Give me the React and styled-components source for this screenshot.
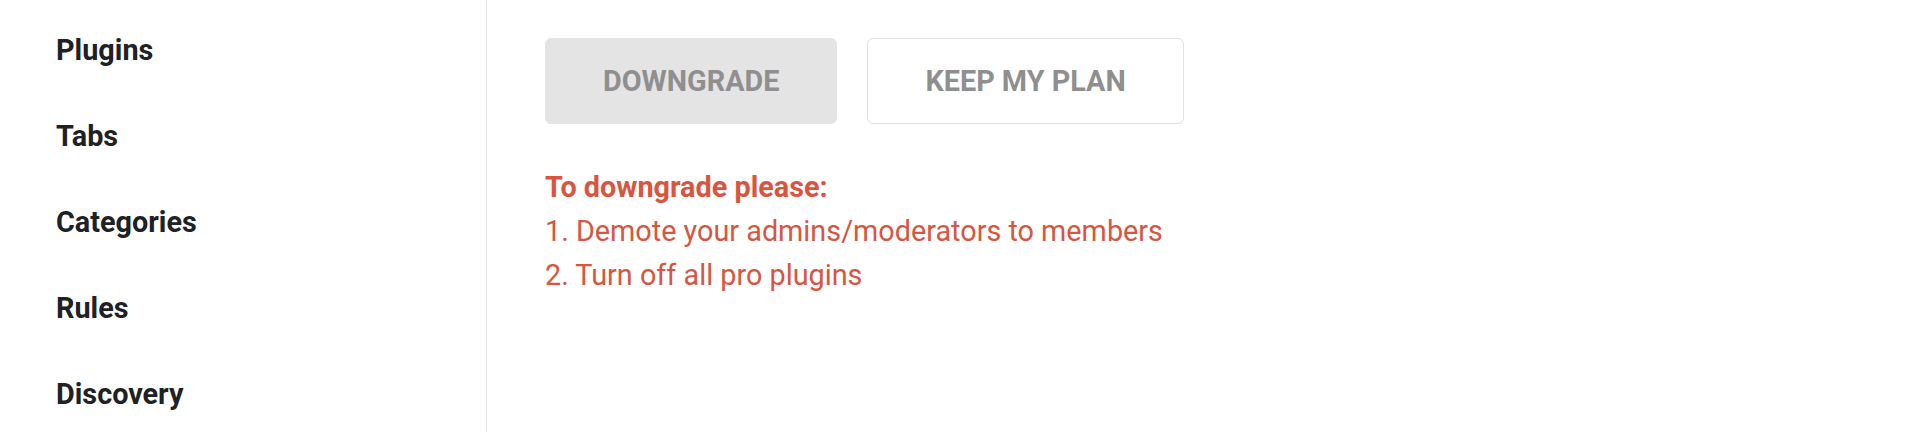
import React from 'react';
import styled, { createGlobalStyle } from 'styled-components';

const GlobalStyle = createGlobalStyle`
  body {
    margin: 0;
    background: #fff;
    font-family: Roboto, "Liberation Sans", sans-serif;
  }
`;

const Page = styled.div`
  display: flex;
  height: 432px;
  overflow: hidden;
`;

const Sidebar = styled.nav`
  width: 487px;
  flex-shrink: 0;
  border-right: 1px solid #e6e6e6;
  padding-top: 7px;
  box-sizing: border-box;
  display: flex;
  flex-direction: column;
`;

const NavItem = styled.div`
  height: 86px;
  flex-shrink: 0;
  display: flex;
  align-items: center;
  padding-left: 56px;
  font-size: 28.8px;
  font-weight: 700;
  color: #202124;
`;

const Content = styled.main`
  flex: 1;
  padding: 38px 0 0 58px;
`;

const ButtonRow = styled.div`
  display: flex;
  gap: 30px;
`;

const Button = styled.button`
  height: 86px;
  padding: 0 57px;
  box-sizing: border-box;
  border-radius: 6px;
  font-family: Roboto, "Liberation Sans", sans-serif;
  font-size: 28.8px;
  font-weight: 700;
  color: #8f8f8f;
  text-transform: uppercase;
  cursor: pointer;
  background: ${(p) => (p.$filled ? '#e4e4e4' : '#fff')};
  border: 1px solid ${(p) => (p.$filled ? '#e4e4e4' : '#e2e2e2')};
`;

const Notice = styled.div`
  margin-top: 41px;
  color: #d9553f;
  font-size: 28.8px;
  line-height: 44px;
`;

const NoticeLine = styled.div`
  font-weight: ${(p) => (p.$bold ? 700 : 400)};
`;

const navItems = ['Plugins', 'Tabs', 'Categories', 'Rules', 'Discovery'];

export default function App() {
  return (
    <>
      <GlobalStyle />
      <Page>
        <Sidebar>
          {navItems.map((item) => (
            <NavItem key={item}>{item}</NavItem>
          ))}
        </Sidebar>
        <Content>
          <ButtonRow>
            <Button $filled>Downgrade</Button>
            <Button>Keep my plan</Button>
          </ButtonRow>
          <Notice>
            <NoticeLine $bold>To downgrade please:</NoticeLine>
            <NoticeLine>1. Demote your admins/moderators to members</NoticeLine>
            <NoticeLine>2. Turn off all pro plugins</NoticeLine>
          </Notice>
        </Content>
      </Page>
    </>
  );
}
